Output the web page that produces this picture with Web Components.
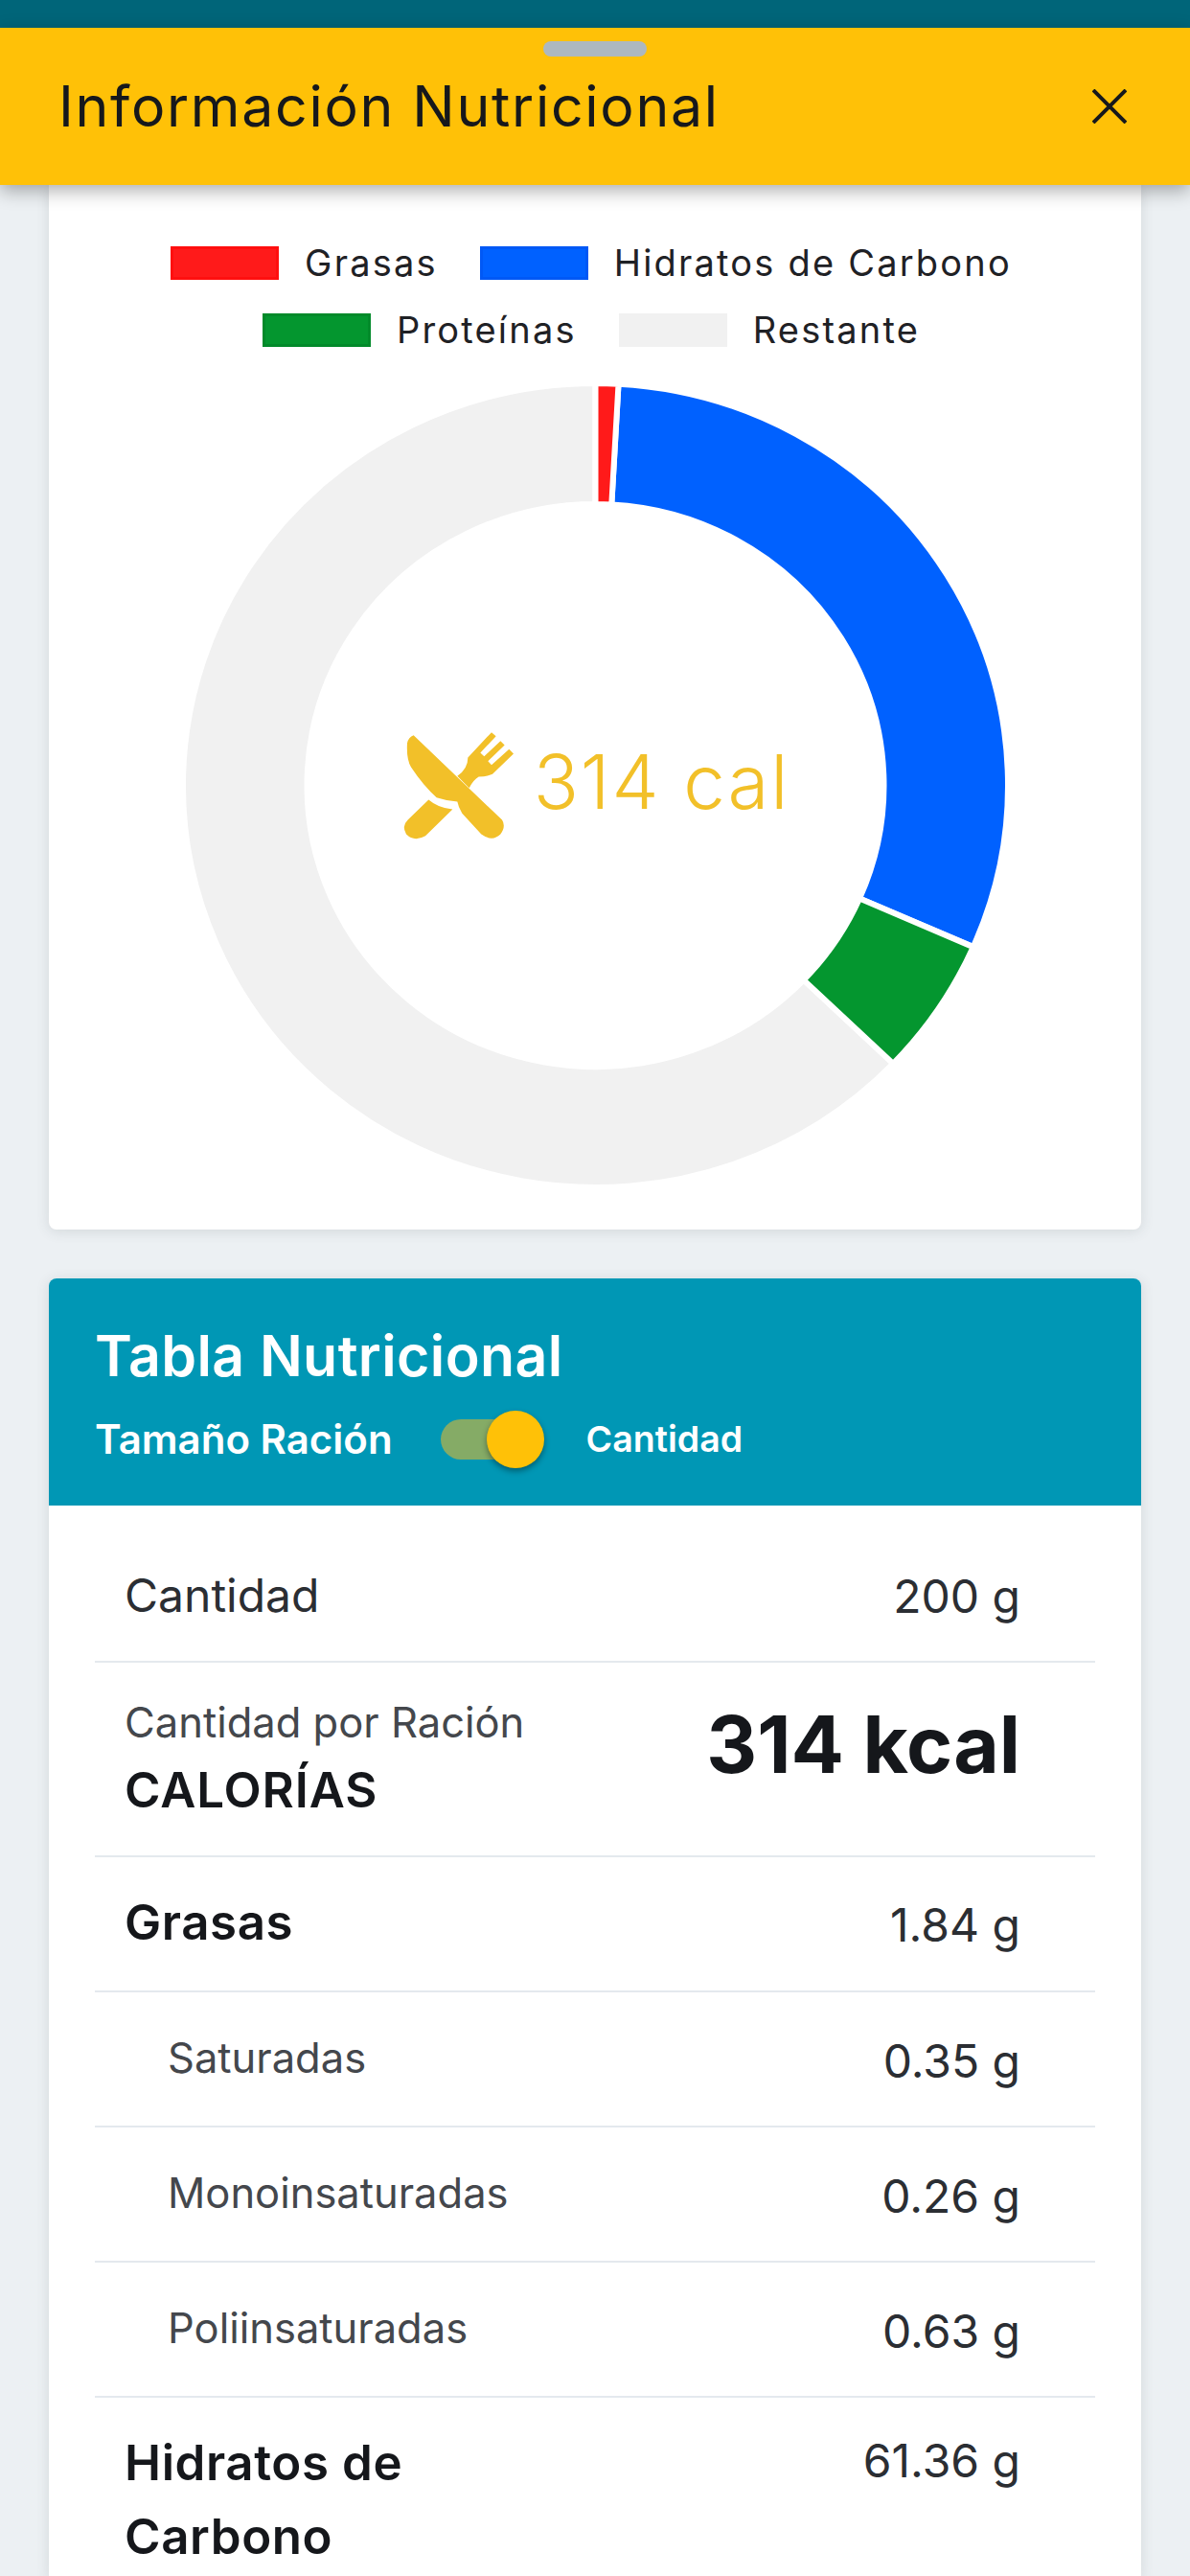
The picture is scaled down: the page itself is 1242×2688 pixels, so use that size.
<!DOCTYPE html>
<html lang="es">
<head>
<meta charset="utf-8">
<title>Información Nutricional</title>
<style>
  html, body { margin: 0; padding: 0; height: 2688px; overflow: hidden; background: #ecf0f3; }
  body { font-family: Inter, "Noto Sans", sans-serif; color: #1a1c20; }
</style>
</head>
<body>
<nutri-page>
  <sheet-header slot="header" title-text="Información Nutricional"></sheet-header>
  <chart-card>
    <macro-legend></macro-legend>
    <macro-donut calories="314 cal"></macro-donut>
  </chart-card>
  <table-card heading="Tabla Nutricional">
    <nutri-row label="Cantidad" value="200 g"></nutri-row>
    <nutri-row kind="calories" label="Cantidad por Ración" sub="CALORÍAS" value="314 kcal"></nutri-row>
    <nutri-row kind="bold" label="Grasas" value="1.84 g"></nutri-row>
    <nutri-row kind="indent" label="Saturadas" value="0.35 g"></nutri-row>
    <nutri-row kind="indent" label="Monoinsaturadas" value="0.26 g"></nutri-row>
    <nutri-row kind="indent" label="Poliinsaturadas" value="0.63 g"></nutri-row>
    <nutri-row kind="bold top" label="Hidratos de Carbono" value="61.36 g"></nutri-row>
  </table-card>
</nutri-page>

<script>
class NutriPage extends HTMLElement {
  constructor() {
    super();
    this.attachShadow({ mode: 'open' }).innerHTML = `
      <style>
        :host { display: flex; flex-direction: column; height: 2688px; overflow: hidden; }
        .bar { height: 29px; background: #006579; flex: none; }
        .content { display: flex; flex-direction: column; gap: 51px; padding: 0 51px; }
      </style>
      <div class="bar"></div>
      <slot name="header"></slot>
      <div class="content"><slot></slot></div>
    `;
  }
}

class SheetHeader extends HTMLElement {
  constructor() {
    super();
    this.attachShadow({ mode: 'open' }).innerHTML = `
      <style>
        :host { display: block; position: relative; z-index: 2; flex: none; height: 164px; background: #ffc107;
          box-shadow: 0 6px 18px rgba(0,0,0,.32); }
        .handle { width: 108px; height: 16px; border-radius: 8px; background: #adb8bf; margin: 14px auto 0; }
        .row { display: flex; align-items: center; justify-content: space-between; padding: 10px 66px 0 61px; }
        h1 { margin: 0; font: 400 59px/84px Inter, sans-serif; letter-spacing: 1.7px; color: #16181c; }
        svg { width: 36px; height: 36px; display: block; }
      </style>
      <div class="handle"></div>
      <div class="row">
        <h1>${this.getAttribute('title-text')}</h1>
        <svg viewBox="0 0 36 36"><path d="M1 1 L35 35 M35 1 L1 35" stroke="#16181c" stroke-width="4" fill="none"/></svg>
      </div>
    `;
  }
}

class ChartCard extends HTMLElement {
  constructor() {
    super();
    this.attachShadow({ mode: 'open' }).innerHTML = `
      <style>
        :host { display: block; background: #fff; height: 1090px; box-sizing: border-box; padding-top: 64px;
          border-radius: 0 0 8px 8px; box-shadow: 0 2px 14px rgba(60,70,80,.14); }
      </style>
      <slot></slot>
    `;
  }
}

class MacroLegend extends HTMLElement {
  constructor() {
    super();
    const item = (fill, edge, text) => `<span class="item"><i style="background:${fill};border-color:${edge}"></i>${text}</span>`;
    this.attachShadow({ mode: 'open' }).innerHTML = `
      <style>
        :host { display: flex; flex-direction: column; gap: 35px; align-items: center; padding-right: 8px; }
        .line { display: flex; gap: 44px; height: 35px; }
        .item { display: flex; align-items: center; gap: 27px; font: 400 38px/35px Inter, sans-serif; letter-spacing: 2.2px; color: #1f2125; }
        i { display: block; box-sizing: border-box; width: 113px; height: 35px; border: 3px solid; }
      </style>
      <div class="line">${item('#ff1a1a', '#ff0f0f', 'Grasas')}${item('#0061ff', '#0058f5', 'Hidratos de Carbono')}</div>
      <div class="line">${item('#04962f', '#028a2a', 'Proteínas')}${item('#f1f1f1', '#f1f1f1', 'Restante')}</div>
    `;
  }
}

class MacroDonut extends HTMLElement {
  constructor() {
    super();
    // drawn on a slightly flattened ring, same as the stretched canvas in the app
    const W = 861, H = 839, cx = W / 2, cy = H / 2;
    const ro = [430.5, 419.5], ri = [301, 293.5];
    const pt = (r, deg) => {
      const a = deg * Math.PI / 180;
      return (cx + r[0] * Math.sin(a)).toFixed(2) + ' ' + (cy - r[1] * Math.cos(a)).toFixed(2);
    };
    const slice = (from, to, color) => {
      const big = to - from > 180 ? 1 : 0;
      return `<path fill="${color}" stroke="#fff" stroke-width="6" stroke-linejoin="round" d="M${pt(ro, from)}
        A${ro[0]} ${ro[1]} 0 ${big} 1 ${pt(ro, to)} L${pt(ri, to)}
        A${ri[0]} ${ri[1]} 0 ${big} 0 ${pt(ri, from)} Z"/>`;
    };
    this.attachShadow({ mode: 'open' }).innerHTML = `
      <style>
        :host { display: block; position: relative; width: ${W}px; height: ${H}px; margin: 38px 0 0 140px; }
        svg.ring { display: block; }
        .center { position: absolute; inset: 0 0 8px 0; display: flex; align-items: center; justify-content: center; gap: 18px;
          color: #f2c029; font: 350 78px/1 Inter, sans-serif; letter-spacing: 1.9px; }
        .icon { width: 120px; height: 117px; display: block; margin-top: 9px; }
      </style>
      <svg class="ring" width="${W}" height="${H}" viewBox="0 0 ${W} ${H}">
        ${slice(133.8, 360, '#f1f1f1')}
        ${slice(3.2, 113.7, '#0061ff')}
        ${slice(113.7, 133.8, '#04962f')}
        ${slice(0, 3.2, '#ff1a1a')}
      </svg>
      <div class="center">
        <svg class="icon" viewBox="110 125 360 350" fill="#f2c029">
          <path d="M392 131 L406 143 L357 195 L369 206 L420 158 L433 171 L381 221 L392 233 L447 184 L461 198 L395 262 Q375 270 352 270 Q335 280 322 305 L285 268 Q318 245 318 210 Z"/>
          <path d="M148 140 L325 310 L425 405 Q438 425 420 450 Q395 475 360 450 L300 385 Q288 365 285 348 Q250 345 220 335 Q180 300 140 240 Q125 215 128 165 Q132 145 148 140 Z"/>
          <path d="M195 342 Q225 368 270 372 L185 455 Q150 475 125 450 Q110 425 130 405 Z"/>
        </svg>
        <span>${this.getAttribute('calories')}</span>
      </div>
    `;
  }
}

class TableCard extends HTMLElement {
  constructor() {
    super();
    this.attachShadow({ mode: 'open' }).innerHTML = `
      <style>
        :host { display: block; background: #fff; border-radius: 8px 8px 0 0; box-shadow: 0 2px 14px rgba(60,70,80,.14); }
        header { height: 237px; box-sizing: border-box; background: #0097b5; color: #fff; padding: 47px 48px 0; border-radius: 8px 8px 0 0; }
        h2 { margin: 0; font: 600 59px/68px Inter, sans-serif; letter-spacing: .4px; }
        .toggle { display: flex; align-items: center; margin-top: 23px; font: 600 42px/59px Inter, sans-serif; }
        .toggle .small { font-size: 37.5px; }
        .switch { position: relative; width: 102px; height: 42px; background: #85ab66; border-radius: 21px; margin: 0 50px 0 50px; }
        .knob { position: absolute; right: -6px; top: -9px; width: 60px; height: 60px; border-radius: 50%; background: #ffc107;
          box-shadow: 0 3px 6px rgba(0,0,0,.4); }
        .rows { padding: 23px 48px 0; }
      </style>
      <header>
        <h2>${this.getAttribute('heading')}</h2>
        <div class="toggle"><span>Tamaño Ración</span><div class="switch"><div class="knob"></div></div><span class="small">Cantidad</span></div>
      </header>
      <div class="rows"><slot></slot></div>
    `;
  }
}

class NutriRow extends HTMLElement {
  constructor() {
    super();
    const sub = this.getAttribute('sub');
    this.attachShadow({ mode: 'open' }).innerHTML = `
      <style>
        :host { display: grid; grid-template-columns: 1fr auto; align-items: center; box-sizing: border-box; min-height: 141px;
          padding: 0 78px 0 31px; border-bottom: 2px solid #e4e9ee; font-family: Inter, sans-serif; color: #2b2e33; }
        .label { font: 400 48px/76px Inter, sans-serif; padding-top: 3px; }
        .value { font: 400 48px/76px Inter, sans-serif; padding-top: 5px; }
        :host([kind~="bold"]) .label { font-weight: 600; font-size: 51px; letter-spacing: .6px; width: 380px; color: #15171b;
          line-height: 77px; padding: 0 0 4px; }
        :host([kind~="bold"]) .value { padding-top: 2px; }
        :host([kind~="indent"]) .label { font-size: 43.5px; padding: 0 0 4px 45px; color: #44474c; }
        :host([kind~="top"]) { align-items: start; padding-top: 29px; }
        :host([kind~="top"]) .value { padding-top: 0; margin-top: -1px; }
        :host([kind="calories"]) { min-height: 203px; }
        :host([kind="calories"]) .text { padding-bottom: 5px; }
        :host([kind="calories"]) .label { font-size: 43.5px; line-height: 64px; color: #44474c; padding: 0; }
        :host([kind="calories"]) .sub { font: 600 51px/68px Inter, sans-serif; letter-spacing: .9px; color: #15171b; margin-top: 5px; }
        :host([kind="calories"]) .value { font: 700 82px/1 Inter, sans-serif; color: #15171b; padding: 0 0 30px; }
      </style>
      <div class="text"><div class="label">${this.getAttribute('label')}</div>${sub ? `<div class="sub">${sub}</div>` : ''}</div>
      <div class="value">${this.getAttribute('value')}</div>
    `;
  }
}

customElements.define('nutri-page', NutriPage);
customElements.define('sheet-header', SheetHeader);
customElements.define('chart-card', ChartCard);
customElements.define('macro-legend', MacroLegend);
customElements.define('macro-donut', MacroDonut);
customElements.define('table-card', TableCard);
customElements.define('nutri-row', NutriRow);
</script>
</body>
</html>
